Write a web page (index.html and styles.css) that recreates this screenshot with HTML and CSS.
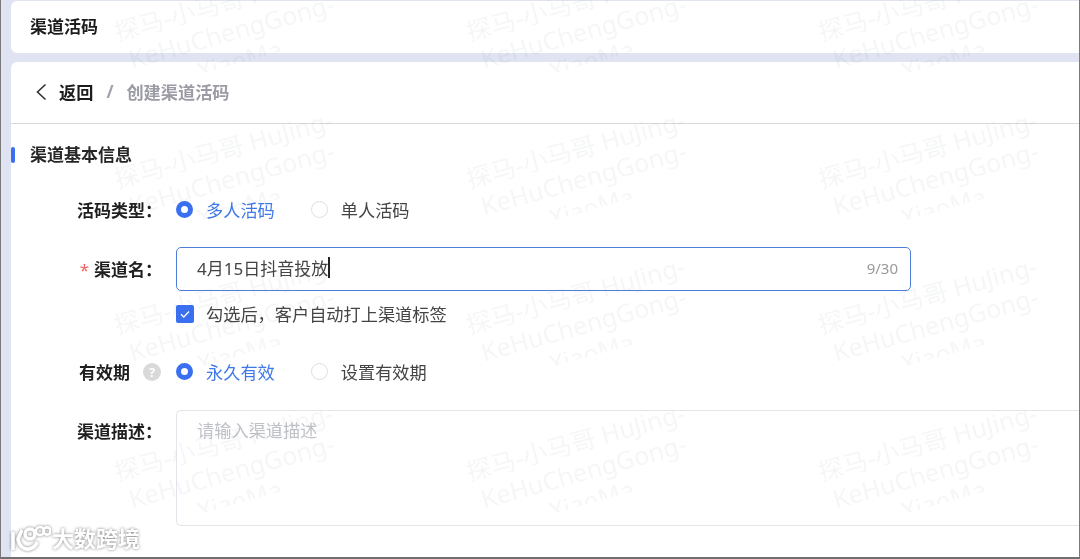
FILE: index.html
```html
<!DOCTYPE html>
<html lang="zh">
<head>
<meta charset="utf-8">
<title>创建渠道活码</title>
<link rel="stylesheet" href="styles.css">
</head>
<body>
<div class="app">
  <header class="card top-card"><h1 class="page-title">渠道活码</h1></header>
  <main class="card main-card">
    <nav class="crumbs">
      <svg class="back" width="14" height="18" viewBox="0 0 14 18"><path d="M11.500 1.500 3.500 9l8 7.500" fill="none" stroke="#333" stroke-width="1.600"/></svg>
      <span class="crumb-back">返回</span>
      <span class="crumb-sep">/</span>
      <span class="crumb-now">创建渠道活码</span>
    </nav>
    <h2 class="section-title">渠道基本信息</h2>
    <form class="form">
      <div class="row row-type">
        <div class="label">活码类型：</div>
        <div class="controls">
          <span class="radio on"><i class="dot"></i>多人活码</span>
          <span class="radio"><i class="dot"></i>单人活码</span>
        </div>
      </div>
      <div class="row row-name">
        <div class="label"><b class="req">*</b>渠道名：</div>
        <div class="input"><span class="value">4月15日抖音投放</span><i class="caret"></i><span class="count">9/30</span></div>
      </div>
      <div class="row row-check">
        <div class="label"></div>
        <div class="check-line">
          <span class="check"><svg width="18" height="18" viewBox="0 0 18 18"><path d="M5 9.200 7.800 12 13 6.500" fill="none" stroke="#fff" stroke-width="1.300"/></svg></span>
          勾选后，客户自动打上渠道标签
        </div>
      </div>
      <div class="row row-valid">
        <div class="label label-help">有效期<span class="help">?</span></div>
        <div class="controls">
          <span class="radio on"><i class="dot"></i>永久有效</span>
          <span class="radio"><i class="dot"></i>设置有效期</span>
        </div>
      </div>
      <div class="row row-desc">
        <div class="label">渠道描述：</div>
        <div class="textarea">请输入渠道描述</div>
      </div>
    </form>
  </main>
</div>
<div class="marks" aria-hidden="true">
  <div class="mark"><p>探马-小马哥 HuJing-<br>KeHuChengGong-<br>XiaoMa</p></div>
  <div class="mark"><p>探马-小马哥 HuJing-<br>KeHuChengGong-<br>XiaoMa</p></div>
  <div class="mark"><p>探马-小马哥 HuJing-<br>KeHuChengGong-<br>XiaoMa</p></div>
  <div class="mark"><p>探马-小马哥 HuJing-<br>KeHuChengGong-<br>XiaoMa</p></div>
  <div class="mark"><p>探马-小马哥 HuJing-<br>KeHuChengGong-<br>XiaoMa</p></div>
  <div class="mark"><p>探马-小马哥 HuJing-<br>KeHuChengGong-<br>XiaoMa</p></div>
  <div class="mark"><p>探马-小马哥 HuJing-<br>KeHuChengGong-<br>XiaoMa</p></div>
  <div class="mark"><p>探马-小马哥 HuJing-<br>KeHuChengGong-<br>XiaoMa</p></div>
  <div class="mark"><p>探马-小马哥 HuJing-<br>KeHuChengGong-<br>XiaoMa</p></div>
  <div class="mark"><p>探马-小马哥 HuJing-<br>KeHuChengGong-<br>XiaoMa</p></div>
  <div class="mark"><p>探马-小马哥 HuJing-<br>KeHuChengGong-<br>XiaoMa</p></div>
  <div class="mark"><p>探马-小马哥 HuJing-<br>KeHuChengGong-<br>XiaoMa</p></div>
</div>
<div class="brand">
  <svg width="44" height="30" viewBox="0 0 44 30"><g fill="none" stroke="#fff" stroke-width="3.600"><path d="M6 9v18"/><path d="M15 7 11 16c1 7 6 11 11 10 4-1 7-3 8-7"/><circle cx="23" cy="11" r="5"/></g><g fill="none" stroke="#fff" stroke-width="2.600"><circle cx="33" cy="8" r="4"/><circle cx="40" cy="8" r="3.600"/></g></svg>
  <span class="brand-name">大数跨境</span>
</div>
</body>
</html>
```
FILE: styles.css
```css
* { box-sizing: border-box; }
html, body { margin: 0; height: 100%; overflow: hidden; }
body {
  position: relative;
  width: 1080px;
  height: 559px;
  font-family: "Noto Sans", "Noto Sans CJK SC", sans-serif;
  font-size: 17.200px;
  color: #333;
  background: #fff;
}
.app {
  height: 559px;
  padding: 1px 0 0 10px;
  background: #dfe3f2;
  border-left: 1px solid #7a7a7a;
  border-right: 1px solid #7a7a7a;
  border-bottom: 2px solid #707070;
  overflow: hidden;
  filter: blur(0.35px);
}
.card { background: #fff; border-radius: 6px 0 0 6px; }
.top-card { height: 52px; display: flex; align-items: center; padding: 0 0 4px 19px; }
.page-title { margin: 0; font-size: 17px; font-weight: 700; color: #1c1c1c; }
.main-card { height: 520px; margin-top: 9px; }
.crumbs {
  height: 62px;
  display: flex;
  align-items: center;
  padding: 0 0 2px 23px;
  border-bottom: 1px solid #d9d9d9;
  font-weight: 700;
}
.back { margin-right: 11px; }
.crumb-back { color: #1c1c1c; }
.crumb-sep { margin: 0 13px; color: #a3a3ad; width: 7px; }
.crumb-now { color: #9b9ba5; }
.section-title {
  margin: 20px 0 0;
  height: 22px;
  line-height: 22px;
  padding-left: 19px;
  font-size: 17px;
  font-weight: 700;
  color: #262626;
  position: relative;
}
.section-title::before {
  content: "";
  position: absolute;
  left: 0;
  top: 3px;
  width: 4px;
  height: 16px;
  background: #3a6ff0;
  border-radius: 2px;
}
.form { padding-top: 31px; }
.row { display: grid; grid-template-columns: 165px 1fr; align-items: center; }
.label { text-align: right; font-weight: 700; font-size: 17px; color: #1f1f1f; padding-right: 14px; white-space: nowrap; }
.req { color: #f5605c; font-weight: 400; margin-right: 5px; }
.row-type { height: 24px; }
.row-name { margin-top: 26px; }
.row-name .label { padding-bottom: 2px; }
.row-check { margin-top: 10px; height: 18px; }
.row-valid { margin-top: 40px; height: 24px; }
.row-desc { margin-top: 27px; align-items: start; }
.row-desc .label { padding-top: 8px; }
.controls { display: flex; gap: 36px; }
.radio { display: flex; align-items: center; gap: 13px; color: #444; }
.radio.on { color: #3f78e8; }
.dot {
  width: 17px;
  height: 17px;
  border-radius: 50%;
  border: 1px solid #dedede;
  background: #fff;
}
.radio.on .dot { border: 5px solid #3a6ff0; }
.input {
  width: 735px;
  height: 44px;
  display: flex;
  align-items: center;
  padding: 0 12px 3px 20px;
  border: 1px solid #4f7fd8;
  border-radius: 5px;
  color: #444;
  font-size: 17px;
}
.caret { width: 1.500px; height: 21px; background: #222; }
.count { margin-left: auto; font-size: 15px; color: #9a9a9a; }
.check-line { display: flex; align-items: center; gap: 13px; color: #444; }
.check { width: 18px; height: 18px; margin-right: -1px; background: #3a6ff0; border-radius: 2px; display: flex; }
.label-help { padding-right: 15px; display: flex; justify-content: flex-end; align-items: center; gap: 13px; }
.help {
  width: 18px;
  height: 18px;
  flex: none;
  border-radius: 50%;
  background: #d9d9d9;
  color: #fff;
  font-size: 13px;
  line-height: 18px;
  text-align: center;
  font-weight: 700;
}
.textarea {
  height: 116px;
  padding: 6px 20px;
  border: 1px solid #e3e5ea;
  border-right: 0;
  border-radius: 5px 0 0 5px;
  color: #c0c2c8;
}
.marks {
  position: absolute;
  inset: 0;
  pointer-events: none;
  display: grid;
  grid-template-columns: repeat(3, 352px);
  grid-auto-rows: 146.500px;
  padding-left: 102px;
  margin-top: -79px;
  overflow: hidden;
  filter: blur(0.35px);
}
.mark { height: 146.500px; width: 352px; }
.mark p {
  margin: 65px 0 0 2px;
  width: 250px;
  height: 78px;
  overflow: hidden;
  text-align: center;
  font-size: 25px;
  line-height: 30px;
  white-space: nowrap;
  color: rgba(120, 125, 145, 0.07);
  transform: rotate(-15.500deg);
  transform-origin: 125px 36px;
}
.brand {
  position: absolute;
  left: 7px;
  bottom: 6px;
  display: flex;
  align-items: center;
  gap: 1px;
  filter: drop-shadow(0 0 1.500px rgba(0, 0, 0, 0.5));
}
.brand-name { font-size: 22px; font-weight: 700; color: #fff; line-height: 28px; }
```
